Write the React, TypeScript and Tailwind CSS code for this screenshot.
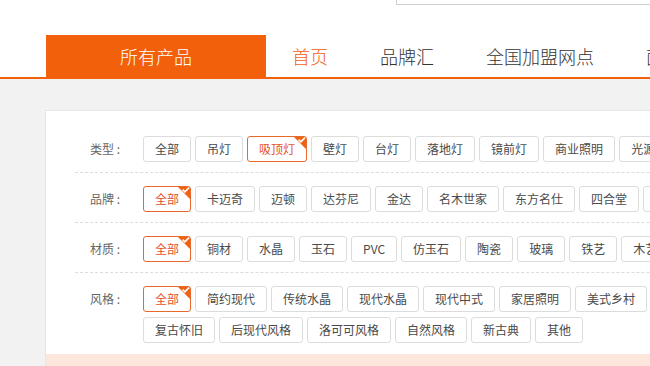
import React from "react";

type Row = { label: string; items: string[]; selected: string };

const rows: Row[] = [
  {
    label: "类型",
    items: ["全部", "吊灯", "吸顶灯", "壁灯", "台灯", "落地灯", "镜前灯", "商业照明", "光源"],
    selected: "吸顶灯",
  },
  {
    label: "品牌",
    items: ["全部", "卡迈奇", "迈顿", "达芬尼", "金达", "名木世家", "东方名仕", "四合堂", "欧普"],
    selected: "全部",
  },
  {
    label: "材质",
    items: ["全部", "铜材", "水晶", "玉石", "PVC", "仿玉石", "陶瓷", "玻璃", "铁艺", "木艺"],
    selected: "全部",
  },
  {
    label: "风格",
    items: [
      "全部",
      "简约现代",
      "传统水晶",
      "现代水晶",
      "现代中式",
      "家居照明",
      "美式乡村",
      "复古怀旧",
      "后现代风格",
      "洛可可风格",
      "自然风格",
      "新古典",
      "其他",
    ],
    selected: "全部",
  },
];

const navItems = ["首页", "品牌汇", "全国加盟网点", "面板灯"];

function Tag({ text, active }: { text: string; active: boolean }) {
  if (!active) {
    return (
      <span className="h-[26px] shrink-0 rounded-[3px] border border-[#dcdcdc] px-[11px] text-[12px] leading-[24px] text-[#4a4a4a] whitespace-nowrap">
        {text}
      </span>
    );
  }
  return (
    <span className="relative h-[26px] shrink-0 overflow-hidden rounded-[3px] border border-[#e9692c] px-[11px] text-[12px] leading-[24px] text-[#e5502a] whitespace-nowrap">
      {text}
      <svg className="absolute -right-px -top-px" width="14" height="14" viewBox="0 0 14 14">
        <polygon points="0,0 14,0 14,14" fill="#ee6214" />
        <path d="M5.6 3.6 L7.9 5.8 L12 1.6" stroke="#fff" strokeWidth="1.6" fill="none" />
      </svg>
    </span>
  );
}

export default function App() {
  return (
    <div className="relative h-[366px] w-[650px] overflow-hidden bg-white font-['Noto_Sans_CJK_SC','Microsoft_YaHei',sans-serif]">
      {/* search box edge */}
      <div className="h-[35px]">
        <div className="ml-[396px] h-[5px] w-[300px] border-b border-l border-[#cfcfcf]" />
      </div>

      {/* nav */}
      <div className="flex h-[42px] items-center">
        <div className="ml-[46px] flex h-full w-[220px] shrink-0 items-center justify-center bg-[#f2600c] text-[18px] font-light text-white">
          所有产品
        </div>
        <div className="flex shrink-0 whitespace-nowrap">
          {navItems.map((n, i) => (
            <span
              key={n}
              className={`shrink-0 px-[26px] text-[18px] font-light ${i === 0 ? "text-[#f2600c]" : "text-[#333]"}`}
            >
              {n}
            </span>
          ))}
        </div>
      </div>
      <div className="h-[2px] bg-[#f2600c]" />

      {/* body */}
      <div className="h-[287px] bg-[#f2f2f2] pt-[31px]">
        <div className="ml-[45px] h-full w-[800px] border-l border-t border-[#e6e6e6] bg-white">
          <div className="pt-[12px]">
            {rows.map((r, idx) => (
              <div
                key={r.label}
                className={`ml-[29px] flex pt-[13px] ${
                  idx < rows.length - 1 ? "border-b border-dashed border-[#dcdcdc] pb-[10px]" : "pb-[11px]"
                }`}
              >
                <div className="w-[68px] shrink-0 pl-[15px] text-[12px] leading-[26px] text-[#666]">
                  {r.label} :
                </div>
                <div className="flex w-[560px] shrink-0 flex-wrap gap-x-[4px] gap-y-[5px]">
                  {r.items.map((t) => (
                    <Tag key={t} text={t} active={t === r.selected} />
                  ))}
                </div>
              </div>
            ))}
          </div>
          <div className="h-[40px] bg-[#fde7dc]" />
        </div>
      </div>
    </div>
  );
}
